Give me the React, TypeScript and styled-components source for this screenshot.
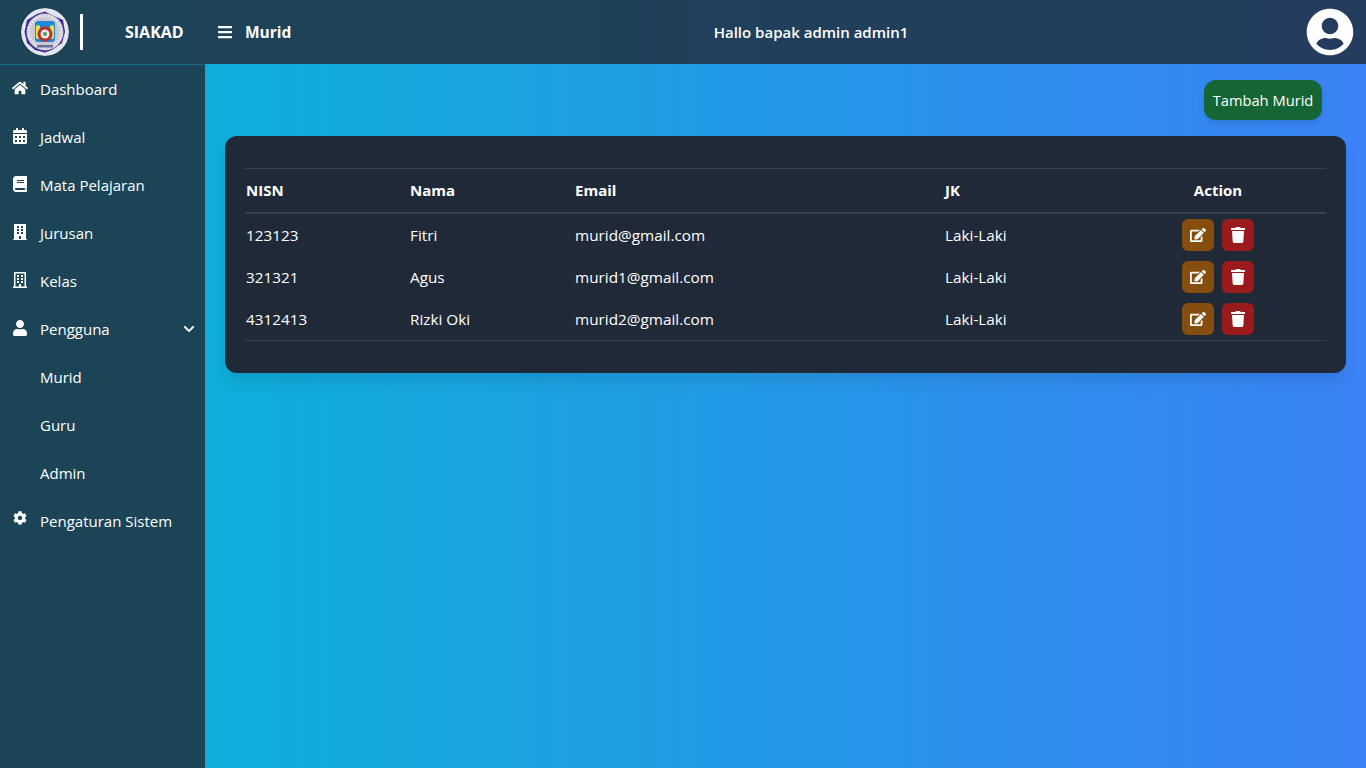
import React from "react";
import styled, { createGlobalStyle } from "styled-components";
import {
  FaBars,
  FaBook,
  FaBuilding,
  FaCalendarAlt,
  FaChevronDown,
  FaCog,
  FaEdit,
  FaHome,
  FaRegBuilding,
  FaTrash,
  FaUser,
  FaUserCircle,
} from "react-icons/fa";

const GlobalStyle = createGlobalStyle`
  html, body {
    margin: 0;
    padding: 0;
    height: 100%;
  }
  body {
    font-family: "Open Sans", "Noto Sans", sans-serif;
    font-size: 15px;
    color: #ffffff;
  }
  * {
    box-sizing: border-box;
  }
`;

const Page = styled.div`
  width: 100%;
  height: 768px;
  overflow: hidden;
  display: flex;
  flex-direction: column;
  background: linear-gradient(to right, #06b6d4, #3b82f6);
`;

const Header = styled.header`
  height: 64px;
  flex-shrink: 0;
  display: flex;
  align-items: center;
  background: linear-gradient(to right, #1c4457, #243c5e);
`;

const Brand = styled.div`
  width: 205px;
  height: 64px;
  flex-shrink: 0;
  display: flex;
  align-items: center;
  padding-left: 21px;
`;

const BrandDivider = styled.span`
  width: 3px;
  height: 36px;
  margin-left: 11px;
  background: #ffffff;
`;

const BrandName = styled.span`
  margin-left: 42px;
  font-weight: 700;
  font-size: 16px;
`;

const PageTitle = styled.div`
  width: 160px;
  flex-shrink: 0;
  display: flex;
  align-items: center;
  gap: 12px;
  padding-left: 12px;
  font-weight: 700;
  font-size: 15.5px;
`;

const Greeting = styled.div`
  flex: 1;
  text-align: center;
  font-weight: 600;
  font-size: 15px;
`;

const Avatar = styled.div`
  width: 48px;
  height: 48px;
  margin-left: 49px;
  margin-right: 12px;
  display: flex;
  color: #ffffff;
`;

const Body = styled.div`
  flex: 1;
  display: flex;
  min-height: 0;
`;

const Sidebar = styled.nav`
  width: 205px;
  flex-shrink: 0;
  background: #1c4457;
  border-top: 1px solid #156a85;
`;

const NavItem = styled.a`
  height: 48px;
  display: flex;
  align-items: center;
  padding: 0 10px 0 40px;
  position: relative;
  color: #ffffff;
`;

const NavIcon = styled.span<{ $small?: boolean }>`
  position: absolute;
  left: 12px;
  top: ${(p) => (p.$small ? "13px" : "15px")};
  width: 16px;
  height: 16px;
  display: flex;
  align-items: center;
  justify-content: center;
  font-size: ${(p) => (p.$small ? "14px" : "16px")};
`;

const NavCaret = styled(FaChevronDown)`
  margin-left: auto;
  font-size: 12px;
`;

const Main = styled.main`
  flex: 1;
  padding: 16px 20px;
  display: flex;
  flex-direction: column;
  align-items: stretch;
`;

const Toolbar = styled.div`
  display: flex;
  justify-content: flex-end;
  padding-right: 24px;
  margin-bottom: 16px;
`;

const AddButton = styled.button`
  height: 40px;
  width: 118px;
  border: none;
  border-radius: 12px;
  background: #166534;
  color: #ffffff;
  font: inherit;
  font-size: 14.7px;
  padding: 0;
  box-shadow: 0 4px 6px rgba(0, 0, 0, 0.1);
`;

const Card = styled.section`
  background: #1f2937;
  border-radius: 12px;
  padding: 32px 20px;
  box-shadow: 0 10px 15px -3px rgba(0, 0, 0, 0.1);
`;

const Table = styled.table`
  width: 100%;
  table-layout: fixed;
  border-collapse: separate;
  border-spacing: 0;
  border-top: 1px solid #374151;
  border-bottom: 1px solid #374151;
`;

const Th = styled.th<{ $center?: boolean }>`
  height: 45px;
  padding: 0 1px 2px;
  border-bottom: 2px solid #374151;
  font-weight: 700;
  font-size: 15px;
  text-align: ${(p) => (p.$center ? "center" : "left")};
`;

const Row = styled.tr`
  height: 42px;
`;

const Td = styled.td`
  padding: 0 1px;
  font-size: 15.3px;
`;

const Actions = styled.div`
  display: flex;
  gap: 8px;
  padding-left: 71px;
`;

const IconButton = styled.button<{ $tone: string }>`
  width: 32px;
  height: 32px;
  border: none;
  border-radius: 6px;
  padding: 0;
  display: flex;
  align-items: center;
  justify-content: center;
  color: #ffffff;
  font-size: 16px;
  background: ${(p) => p.$tone};
`;

const Logo = () => (
  <svg width="48" height="48" viewBox="0 0 48 48">
    <defs>
      <filter id="soft">
        <feGaussianBlur stdDeviation="0.6" />
      </filter>
      <clipPath id="disc">
        <circle cx="24" cy="24" r="24" />
      </clipPath>
    </defs>
    <g filter="url(#soft)" clipPath="url(#disc)">
      <circle cx="24" cy="24" r="24" fill="#e6e5ee" />
      <path d="M24 3.5 31 7 42 12 44 24 41 35 31 42 24 44.5 14 42 6 35 3.5 24 6 12 16 6Z" fill="#3b2a92" />
      <circle cx="24" cy="24" r="18.5" fill="#c9c9d2" />
      <circle cx="24" cy="24" r="16" fill="none" stroke="#ecedf2" strokeWidth="2.5" strokeDasharray="1.5 1.5" />
      <rect x="14" y="13" width="20" height="21" rx="3" fill="#2388d8" />
      <rect x="15" y="17" width="4" height="14" rx="2" fill="#e9e24a" />
      <rect x="29" y="17" width="4" height="14" rx="2" fill="#e9e24a" />
      <circle cx="24" cy="26" r="7.5" fill="#b5302f" />
      <circle cx="24" cy="26" r="4.5" fill="#e4ece4" />
      <circle cx="24" cy="26" r="2" fill="#4d9a68" />
      <rect x="16" y="37" width="16" height="2.5" fill="#6d6a9e" />
    </g>
  </svg>
);

const menu = [
  { label: "Dashboard", icon: <FaHome /> },
  { label: "Jadwal", icon: <FaCalendarAlt /> },
  { label: "Mata Pelajaran", icon: <FaBook /> },
  { label: "Jurusan", icon: <FaBuilding /> },
  { label: "Kelas", icon: <FaRegBuilding /> },
  { label: "Pengguna", icon: <FaUser />, caret: true },
  { label: "Murid" },
  { label: "Guru" },
  { label: "Admin" },
  { label: "Pengaturan Sistem", icon: <FaCog />, small: true },
];

const students = [
  { nisn: "123123", nama: "Fitri", email: "murid@gmail.com", jk: "Laki-Laki" },
  { nisn: "321321", nama: "Agus", email: "murid1@gmail.com", jk: "Laki-Laki" },
  { nisn: "4312413", nama: "Rizki Oki", email: "murid2@gmail.com", jk: "Laki-Laki" },
];

export default function App() {
  return (
    <Page>
      <GlobalStyle />
      <Header>
        <Brand>
          <Logo />
          <BrandDivider />
          <BrandName>SIAKAD</BrandName>
        </Brand>
        <PageTitle>
          <FaBars size={16} />
          Murid
        </PageTitle>
        <Greeting>Hallo bapak admin admin1</Greeting>
        <Avatar>
          <FaUserCircle size={48} />
        </Avatar>
      </Header>
      <Body>
        <Sidebar>
          {menu.map((item) => (
            <NavItem key={item.label}>
              {item.icon && <NavIcon $small={item.small}>{item.icon}</NavIcon>}
              {item.label}
              {item.caret && <NavCaret />}
            </NavItem>
          ))}
        </Sidebar>
        <Main>
          <Toolbar>
            <AddButton>Tambah Murid</AddButton>
          </Toolbar>
          <Card>
            <Table>
              <colgroup>
                <col style={{ width: 164 }} />
                <col style={{ width: 165 }} />
                <col style={{ width: 370 }} />
                <col style={{ width: 166 }} />
                <col style={{ width: 216 }} />
              </colgroup>
              <thead>
                <tr>
                  <Th>NISN</Th>
                  <Th>Nama</Th>
                  <Th>Email</Th>
                  <Th>JK</Th>
                  <Th $center>Action</Th>
                </tr>
              </thead>
              <tbody>
                {students.map((s) => (
                  <Row key={s.nisn}>
                    <Td>{s.nisn}</Td>
                    <Td>{s.nama}</Td>
                    <Td>{s.email}</Td>
                    <Td>{s.jk}</Td>
                    <Td>
                      <Actions>
                        <IconButton $tone="#854d0e">
                          <FaEdit />
                        </IconButton>
                        <IconButton $tone="#991b1b">
                          <FaTrash />
                        </IconButton>
                      </Actions>
                    </Td>
                  </Row>
                ))}
              </tbody>
            </Table>
          </Card>
        </Main>
      </Body>
    </Page>
  );
}
